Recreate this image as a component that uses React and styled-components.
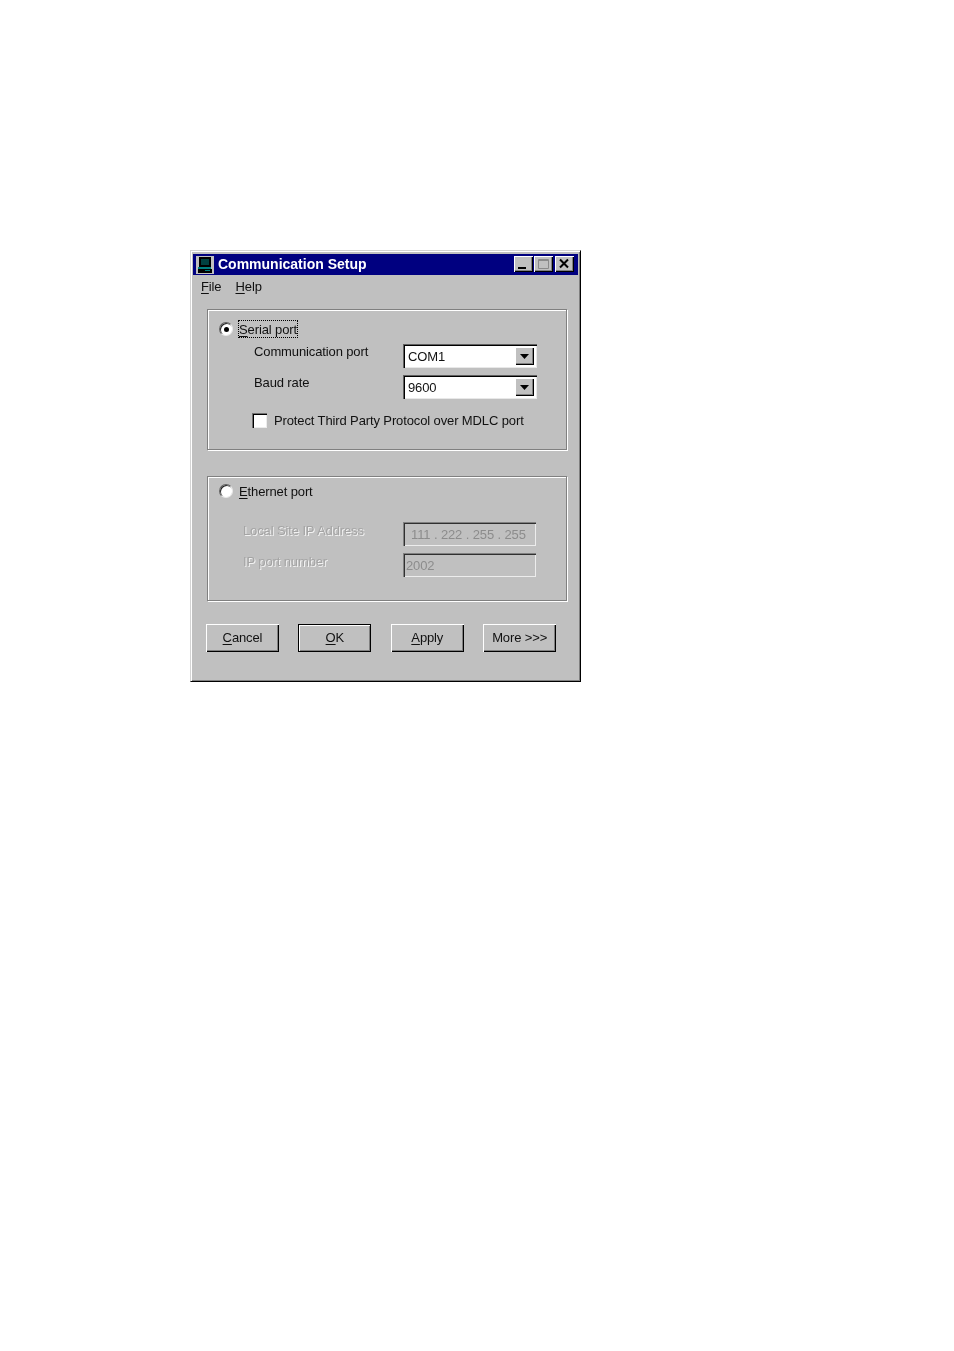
import React from "react";
import styled, { createGlobalStyle } from "styled-components";

const Global = createGlobalStyle`
  html, body {
    margin: 0;
    background: #fff;
  }
  * {
    box-sizing: border-box;
  }
`;

const Page = styled.div`
  min-height: 1351px;
  padding: 250px 0 0 190px;
  font-family: "Liberation Sans", Arial, sans-serif;
  font-size: 13px;
  letter-spacing: -0.12px;
  color: #111;
`;

const Window = styled.div`
  width: 391px;
  height: 432px;
  padding: 3px 2px;
  background: #c0c0c0;
  border: 1px solid;
  border-color: #d4d4d4 #000 #000 #d4d4d4;
  box-shadow: inset 1px 1px 0 #fff, inset -1px -1px 0 #808080;
  filter: blur(0.35px);
`;

const TitleBar = styled.div`
  display: flex;
  align-items: center;
  height: 21px;
  padding: 0 4px 0 3px;
  background: #000080;
`;

const Title = styled.div`
  flex: 1;
  margin: -2px 0 0 4px;
  color: #fff;
  font-weight: bold;
  font-size: 14px;
  letter-spacing: 0;
`;

const CaptionButtons = styled.div`
  display: flex;
  gap: 1px;
  margin-top: -2px;
`;

const CaptionButton = styled.div`
  display: flex;
  align-items: center;
  justify-content: center;
  width: 19px;
  height: 16px;
  margin-left: ${(p) => p.$gap || 0}px;
  background: #c0c0c0;
  box-shadow: inset 1px 1px 0 #fff, inset -1px -1px 0 #000, inset -2px -2px 0 #808080;
`;

const Menu = styled.div`
  display: flex;
  gap: 14px;
  align-items: center;
  height: 24px;
  padding: 0 0 1px 8px;
`;

const Accel = styled.span`
  text-decoration: underline;
  text-underline-offset: 2px;
  text-decoration-thickness: 1px;
`;

const Body = styled.div`
  display: flex;
  flex-direction: column;
  padding: 10px 11px 0 14px;
`;

const Group = styled.div`
  height: ${(p) => p.$height}px;
  margin-bottom: ${(p) => p.$after}px;
  padding: ${(p) => p.$top}px 0 0 11px;
  border: 1px solid #808080;
  box-shadow: inset 1px 1px 0 #fff, 1px 1px 0 #fff;
`;

const RadioRow = styled.div`
  display: flex;
  align-items: center;
  height: 18px;
`;

const Radio = styled.span`
  display: flex;
  align-items: center;
  justify-content: center;
  width: 14px;
  height: 14px;
  margin-right: 5px;
  border-radius: 50%;
  background: #fff;
  border: 1px solid;
  border-color: #606060 #e8e8e8 #e8e8e8 #606060;
  box-shadow: inset 1px 1px 0 #202020;

  &::after {
    content: "";
    width: 5px;
    height: 5px;
    border-radius: 50%;
    background: ${(p) => (p.$checked ? "#000" : "transparent")};
  }
`;

const RadioLabel = styled.span`
  padding: 1px 0 0 0;
  line-height: 15px;
  border: 1px dotted ${(p) => (p.$focused ? "#000" : "transparent")};
`;

const Fields = styled.div`
  display: grid;
  grid-template-columns: ${(p) => p.$label}px ${(p) => p.$field}px;
  grid-auto-rows: 24px;
  row-gap: 7px;
  margin-top: ${(p) => p.$top}px;
  padding-left: ${(p) => p.$indent}px;
`;

const FieldLabel = styled.div`
  line-height: 16px;
  padding-top: ${(p) => (p.$disabled ? "1px" : "0")};
  color: ${(p) => (p.$disabled ? "#a4a4a4" : "inherit")};
  text-shadow: ${(p) => (p.$disabled ? "1px 1px 0 #f2f2f2" : "none")};
`;

const Combo = styled.div`
  display: flex;
  align-items: center;
  justify-content: space-between;
  padding: 0 3px 0 5px;
  background: #fff;
  box-shadow: inset 1px 1px 0 #606060, inset 2px 2px 0 #000, inset -1px -1px 0 #e8e8e8;
`;

const ComboButton = styled.div`
  display: flex;
  align-items: center;
  justify-content: center;
  width: 19px;
  height: 18px;
  background: #c0c0c0;
  box-shadow: inset 1px 1px 0 #fff, inset -1px -1px 0 #000, inset -2px -2px 0 #808080;
`;

const Input = styled.div`
  display: flex;
  align-items: center;
  padding-left: ${(p) => p.$pad}px;
  color: #8c8c8c;
  white-space: nowrap;
  box-shadow: inset 1px 1px 0 #808080, inset 2px 2px 0 #303030, inset -1px -1px 0 #ececec;
`;

const CheckRow = styled.div`
  display: flex;
  align-items: center;
  gap: 7px;
  margin: 14px 0 0 33px;
`;

const Checkbox = styled.span`
  width: 15px;
  height: 15px;
  background: #fff;
  box-shadow: inset 1px 1px 0 #707070, inset 2px 2px 0 #000, inset -1px -1px 0 #ececec;
`;

const Buttons = styled.div`
  display: flex;
  gap: 19.4px;
  margin-left: -1px;
`;

const Button = styled.div`
  display: flex;
  align-items: center;
  justify-content: center;
  width: 73px;
  height: 28px;
  padding-bottom: 2px;
  background: #c0c0c0;
  box-shadow: ${(p) =>
    p.$default
      ? "inset 0 0 0 1px #000, inset 2px 2px 0 #fff, inset -2px -2px 0 #808080"
      : "inset 1px 1px 0 #fff, inset -1px -1px 0 #000, inset -2px -2px 0 #808080"};
`;

const AppIcon = () => (
  <svg width="18" height="18" viewBox="0 0 18 18">
    <rect width="18" height="18" fill="#c0c0c0" />
    <rect x="3" y="1" width="12" height="10" fill="#000" />
    <rect x="5" y="3" width="8" height="6" fill="#004040" />
    <rect x="2" y="11" width="13" height="2" fill="#008080" />
    <rect x="2" y="13" width="14" height="4" fill="#000" />
    <rect x="9" y="14" width="5" height="1" fill="#008080" />
  </svg>
);

const ArrowDown = () => (
  <svg width="9" height="5" viewBox="0 0 9 5">
    <path d="M0 0h9L4.5 5z" fill="#000" />
  </svg>
);

const App = () => (
  <Page>
    <Global />
    <Window>
      <TitleBar>
        <AppIcon />
        <Title>Communication Setup</Title>
        <CaptionButtons>
          <CaptionButton>
            <svg width="19" height="16" viewBox="0 0 19 16">
              <rect x="4" y="11" width="8" height="2" fill="#000" />
            </svg>
          </CaptionButton>
          <CaptionButton>
            <svg width="19" height="16" viewBox="0 0 19 16">
              <path d="M4.5 3.5h10v9h-10z M4 4.5h11" fill="none" stroke="#8a8a8a" />
            </svg>
          </CaptionButton>
          <CaptionButton $gap={1}>
            <svg width="19" height="16" viewBox="0 0 19 16">
              <path d="M5 3.5l8 8M13 3.5l-8 8" stroke="#000" strokeWidth="2" />
            </svg>
          </CaptionButton>
        </CaptionButtons>
      </TitleBar>

      <Menu>
        <span><Accel>F</Accel>ile</span>
        <span><Accel>H</Accel>elp</span>
      </Menu>

      <Body>
        <Group $height={141} $top={10} $after={26}>
          <RadioRow>
            <Radio $checked />
            <RadioLabel $focused><Accel>S</Accel>erial port</RadioLabel>
          </RadioRow>
          <Fields $top={6} $indent={35} $label={149} $field={134}>
            <FieldLabel>Communication port</FieldLabel>
            <Combo>
              COM1
              <ComboButton><ArrowDown /></ComboButton>
            </Combo>
            <FieldLabel>Baud rate</FieldLabel>
            <Combo>
              9600
              <ComboButton><ArrowDown /></ComboButton>
            </Combo>
          </Fields>
          <CheckRow>
            <Checkbox />
            Protect Third Party Protocol over MDLC port
          </CheckRow>
        </Group>

        <Group $height={125} $top={5} $after={23}>
          <RadioRow>
            <Radio />
            <RadioLabel><Accel>E</Accel>thernet port</RadioLabel>
          </RadioRow>
          <Fields $top={22} $indent={24} $label={160} $field={133}>
            <FieldLabel $disabled>Local Site IP Address</FieldLabel>
            <Input $pad={8}>111 . 222 . 255 . 255</Input>
            <FieldLabel $disabled>IP port number</FieldLabel>
            <Input $pad={3}>2002</Input>
          </Fields>
        </Group>

        <Buttons>
          <Button><span><Accel>C</Accel>ancel</span></Button>
          <Button $default><span><Accel>O</Accel>K</span></Button>
          <Button><span><Accel>A</Accel>pply</span></Button>
          <Button>More &gt;&gt;&gt;</Button>
        </Buttons>
      </Body>
    </Window>
  </Page>
);

export default App;
